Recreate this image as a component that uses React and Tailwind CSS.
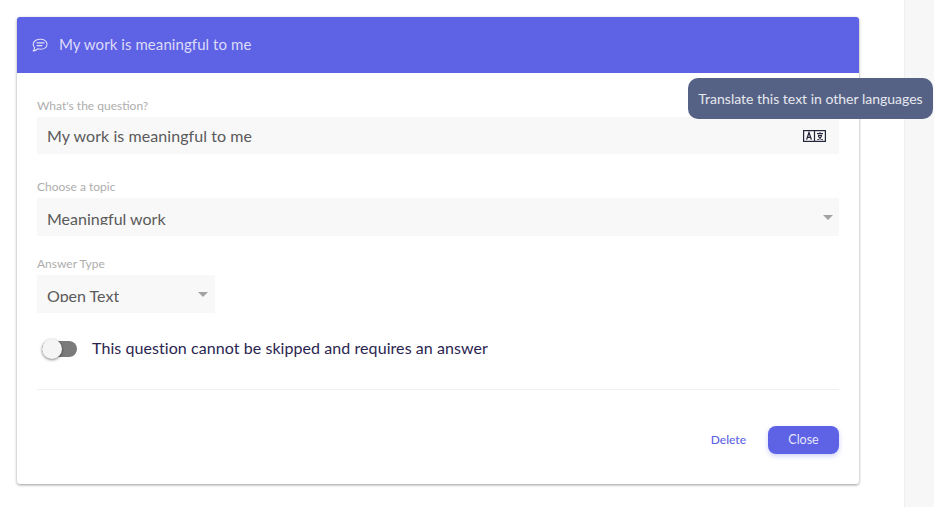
const font = { fontFamily: '"Lato", "Noto Sans", sans-serif' };

function Caret() {
  return <span className="w-0 h-0 border-l-[5.5px] border-r-[5.5px] border-t-[5px] border-l-transparent border-r-transparent border-t-[#a3a3a3]" />;
}

function TranslateIcon() {
  return (
    <svg width="23" height="12" viewBox="0 0 23 12" fill="none" stroke="#23273a">
      <rect x="0.6" y="0.6" width="21.8" height="10.8" strokeWidth="1.2" />
      <path d="M11.5 0.5V11.5" strokeWidth="1.2" />
      <path d="M3.6 9.6L6 2.6L8.4 9.6M4.5 7.4H7.5" strokeWidth="1.3" />
      <path d="M14 3.6H20M17 2.2V3.6M15 5.5H19M18.8 5.5C18 7.8 16.2 9.2 14.4 9.8M15.2 6C16 7.8 17.6 9.2 19.8 9.8" strokeWidth="1.1" />
    </svg>
  );
}

function ChatIcon() {
  return (
    <svg width="16" height="15" viewBox="0 0 16 15" fill="none" stroke="#e0dffb" strokeWidth="1.1" strokeLinecap="round" strokeLinejoin="round">
      <path d="M8.5 1.2C12.2 1.2 15 3.2 15 6.2C15 9.2 12.2 11.2 8.5 11.2C7.4 11.2 6.4 11 5.6 10.8C4.6 12 3 12.8 1.2 13C2 12.2 2.5 11.2 2.6 9.6C1.6 8.7 1.2 7.4 1.2 6.2C1.2 3.2 4.8 1.2 8.5 1.2Z" />
      <path d="M5 4.9H12M5 7.6H10" />
    </svg>
  );
}

export default function App() {
  return (
    <div className="relative flex h-[507px] w-[934px] overflow-hidden bg-white" style={font}>
      <main className="flex-1 pl-[17px] pt-[17px]">
        <section className="h-[467px] w-[842px] rounded-[3px] bg-white shadow-[0_1px_3px_rgba(0,0,0,0.4)]">
          <header className="flex h-[56px] items-center gap-[11px] rounded-t-[3px] bg-[#5e62e5] pl-[15px] text-[15px] tracking-[0.07px] text-[#dcdbf9]">
            <ChatIcon />
            <span className="-translate-y-px">My work is meaningful to me</span>
          </header>
          <div className="px-[20px] pt-[25px]">
            <label className="block text-[12px] leading-[15px] text-[#adadad]">What's the question?</label>
            <div className="mt-[4px] flex h-[37px] items-center justify-between bg-[#f8f8f8] pl-[10px] pr-[13px] text-[16px] tracking-[0.07px] text-[#5a5a5a]">
              <span>My work is meaningful to me</span>
              <TranslateIcon />
            </div>

            <label className="mt-[25px] block text-[12px] leading-[15px] text-[#adadad]">Choose a topic</label>
            <div className="mt-[4px] flex h-[38px] items-center justify-between bg-[#f8f8f8] pl-[10px] pr-[6px] text-[16px] text-[#5a5a5a]">
              <span className="box-content h-[18px] self-start overflow-hidden pt-[9px] leading-[24px]">Meaningful work</span>
              <Caret />
            </div>

            <label className="mt-[20px] block text-[12px] leading-[15px] text-[#adadad]">Answer Type</label>
            <div className="mt-[4px] flex h-[38px] w-[178px] items-center justify-between bg-[#f8f8f8] pl-[10px] pr-[7px] text-[16px] text-[#5a5a5a]">
              <span className="box-content h-[18px] self-start overflow-hidden pt-[9px] leading-[24px]">Open Text</span>
              <Caret />
            </div>

            <div className="mt-[26px] flex items-center gap-[15px] pl-[5px]">
              <div className="relative h-[16px] w-[35px] shrink-0 rounded-full bg-[#7b7b7b]">
                <span className="absolute left-0 top-[-2px] h-[20px] w-[20px] rounded-full bg-[#f5f5f5] shadow-[0_1px_3px_rgba(0,0,0,0.5)]" />
              </div>
              <span className="-translate-y-px text-[16px] leading-[20px] tracking-[0.07px] text-[#2a2550]">This question cannot be skipped and requires an answer</span>
            </div>

            <div className="mt-[30px] h-px bg-[#f0f0f0]" />

            <div className="mt-[36px] flex items-center justify-end gap-[22px]">
              <button className="text-[12px] font-medium text-[#5e62e5]">Delete</button>
              <button className="h-[28px] w-[71px] rounded-[8px] bg-[#5e62e5] text-[12.5px] text-[#e6e6fb] shadow-[0_2px_5px_rgba(94,98,229,0.3)]">Close</button>
            </div>
          </div>
        </section>
      </main>
      <aside className="w-[30px] border-l border-[#efefef] bg-[#f7f7f7]" />
      <div className="absolute left-[688px] top-[78px] flex h-[41px] w-[245px] items-center justify-center rounded-[10px] bg-[#566285] text-[14px] text-[#e6e8ef]">
        Translate this text in other languages
      </div>
    </div>
  );
}
